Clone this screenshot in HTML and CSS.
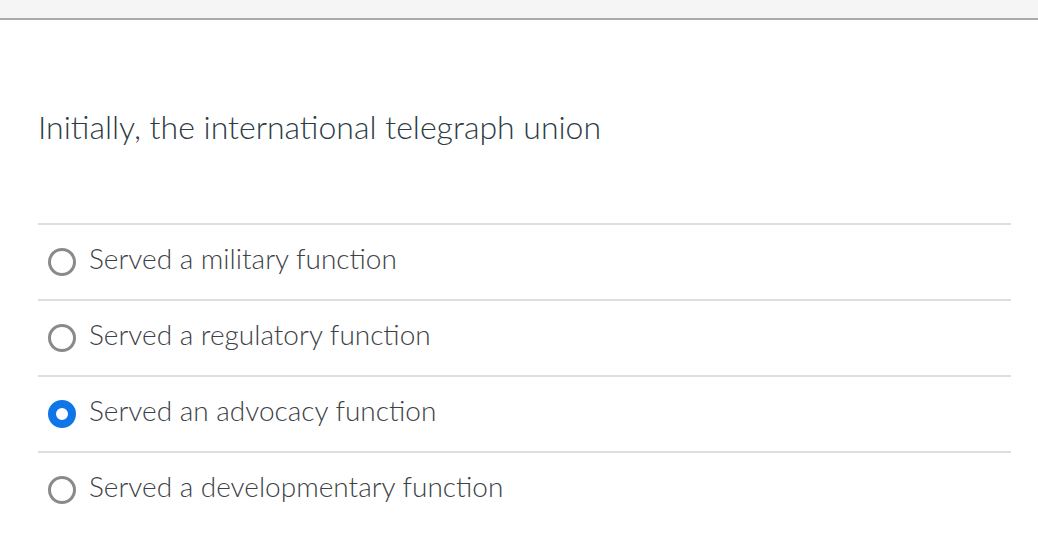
FILE: index.html
```html
<!DOCTYPE html>
<html>
<head>
<meta charset="utf-8">
<link rel="stylesheet" href="styles.css">
</head>
<body>
<div class="topbar"></div>
<div class="content">
  <div class="question">Initially, the international telegraph union</div>
  <div class="answers">
    <label class="answer"><span class="radio"></span><span class="label">Served a military function</span></label>
    <label class="answer"><span class="radio"></span><span class="label">Served a regulatory function</span></label>
    <label class="answer"><span class="radio checked"></span><span class="label">Served an advocacy function</span></label>
    <label class="answer"><span class="radio"></span><span class="label">Served a developmentary function</span></label>
  </div>
</div>
</body>
</html>
```
FILE: styles.css
```css
html, body {
  margin: 0;
  padding: 0;
  background: #fff;
}
body {
  font-family: Lato, "Open Sans", sans-serif;
  color: #3a3f44;
}
.topbar {
  height: 18px;
  background: #f5f5f5;
  border-bottom: 2px solid #aaaaaa;
}
.content {
  padding: 0 27px 0 38px;
}
.question {
  margin-top: 88px;
  font-size: 32px;
  line-height: 38px;
  font-weight: 300;
  color: #2d3b45;
}
.answers {
  margin-top: 77px;
}
.answer {
  display: flex;
  align-items: center;
  gap: 13px;
  height: 66px;
  border-top: 2px solid #dedede;
  padding-left: 10px;
  padding-bottom: 8px;
  box-sizing: content-box;
}
.radio {
  width: 22px;
  height: 22px;
  border: 3px solid #8a8a8a;
  border-radius: 50%;
  box-sizing: content-box;
  flex: none;
  margin-top: 8px;
}
.radio.checked {
  border: 8px solid #1076e8;
  width: 12px;
  height: 12px;
  background: #fff;
}
.label {
  font-size: 28px;
  font-weight: 300;
  color: #3d4247;
}
```
